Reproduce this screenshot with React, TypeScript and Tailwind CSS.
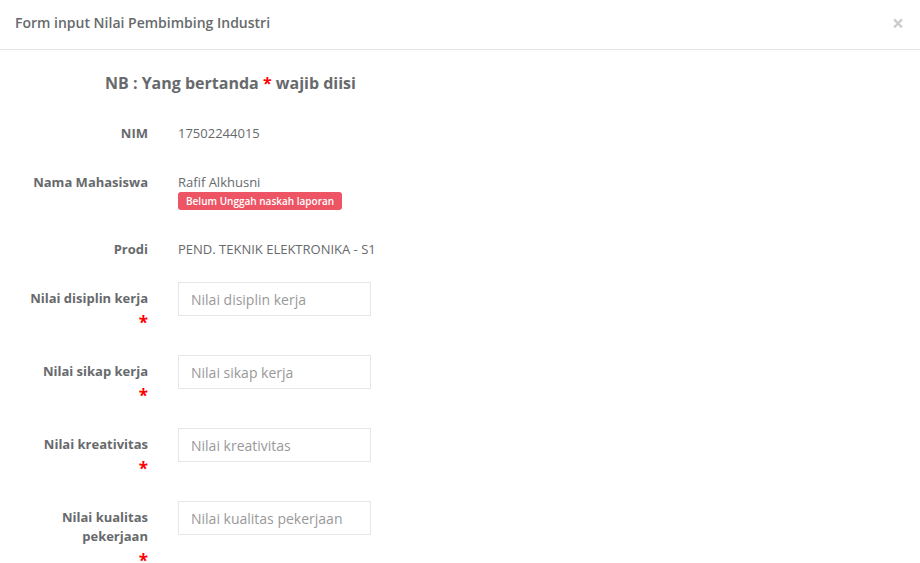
import React from "react";

const font = { fontFamily: '"Open Sans", "Noto Sans", sans-serif' };

function StaticRow({ label, children }: { label: string; children: React.ReactNode }) {
  return (
    <div className="grid grid-cols-[163px_1fr] mb-[15px]">
      <div className="px-[15px] pt-[7px] text-right text-[13px] leading-[19px] font-bold text-[#676a6c]">
        {label}
      </div>
      <div className="px-[15px] py-[7px] min-h-[34px] text-[13px] leading-[19px] text-[#676a6c]">{children}</div>
    </div>
  );
}

function InputRow({ lines, placeholder }: { lines: string[]; placeholder: string }) {
  return (
    <div className="grid grid-cols-[163px_1fr] mb-[15px]">
      <div className="px-[15px] pt-[7px] text-right text-[13px] leading-[19px] font-bold text-[#676a6c]">
        {lines.map((l) => (
          <div key={l}>{l}</div>
        ))}
        <div className="h-[32px] pt-[5px] text-[17px] leading-[19px] text-[#ff0000]">*</div>
      </div>
      <div className="px-[15px]">
        <input
          className="w-[193px] h-[34px] border border-[#e5e6e7] px-[12px] text-[14px] text-[#676a6c] placeholder:text-[#999999] outline-none bg-white"
          style={font}
          placeholder={placeholder}
        />
      </div>
    </div>
  );
}

export default function App() {
  return (
    <div className="w-[920px] h-[563px] bg-white overflow-hidden" style={font}>
      <div className="h-[50px] border-b border-[#e5e5e5] px-[15px] flex items-center justify-between">
        <div className="text-[14px] font-semibold text-[#676a6c] leading-[20px] -mt-[3px]">
          Form input Nilai Pembimbing Industri
        </div>
        <div className="text-[21px] font-bold text-black opacity-20 leading-none -mt-[3px] mr-[1px]">×</div>
      </div>
      <div className="pt-[22px]">
        <div className="pl-[105px] text-[16px] leading-[22px] font-bold text-[#676a6c] mb-[23px]">
          NB : Yang bertanda <span className="text-[#ff0000]">*</span> wajib diisi
        </div>
        <StaticRow label="NIM">17502244015</StaticRow>
        <StaticRow label="Nama Mahasiswa">
          <div>Rafif Alkhusni</div>
          <div className="inline-block bg-[#ed5565] text-white text-[10px] font-semibold leading-[12px] px-[8px] py-[3px] rounded-[3px] align-top">
            Belum Unggah naskah laporan
          </div>
        </StaticRow>
        <StaticRow label="Prodi">PEND. TEKNIK ELEKTRONIKA - S1</StaticRow>
        <InputRow lines={["Nilai disiplin kerja"]} placeholder="Nilai disiplin kerja" />
        <InputRow lines={["Nilai sikap kerja"]} placeholder="Nilai sikap kerja" />
        <InputRow lines={["Nilai kreativitas"]} placeholder="Nilai kreativitas" />
        <InputRow lines={["Nilai kualitas", "pekerjaan"]} placeholder="Nilai kualitas pekerjaan" />
      </div>
    </div>
  );
}
